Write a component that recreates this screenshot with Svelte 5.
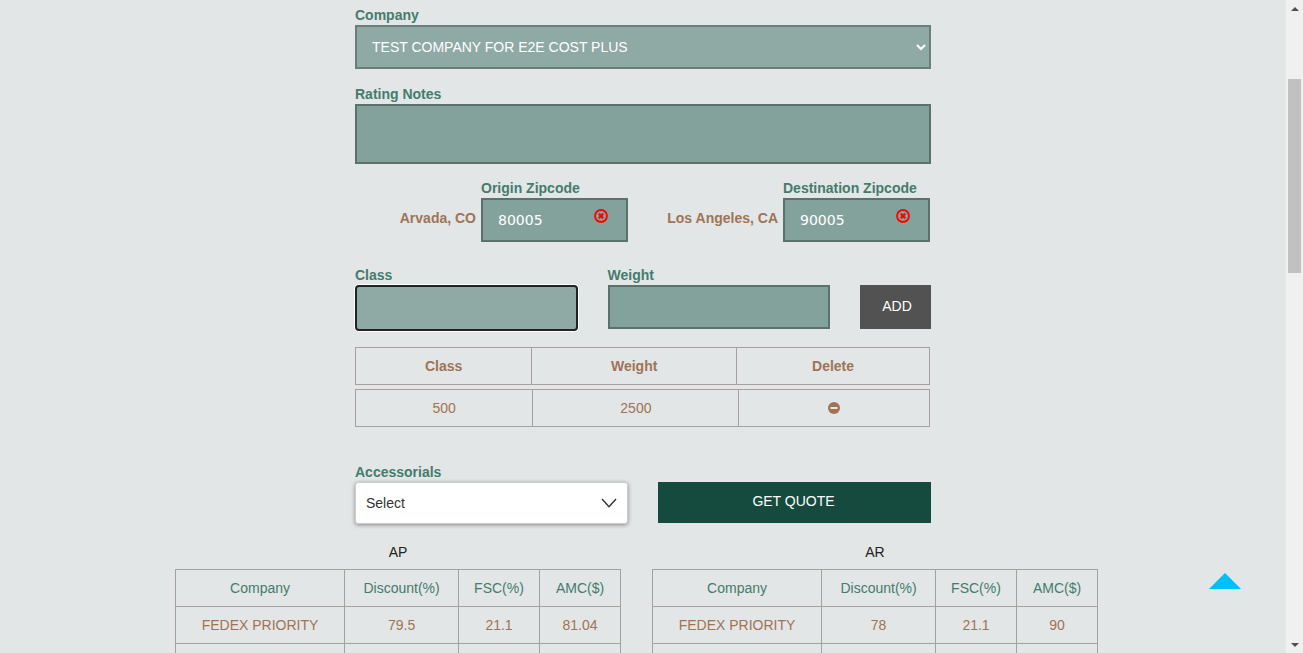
<script>
  let company = $state('TEST COMPANY FOR E2E COST PLUS');
  let notes = $state('');
  let freightClass = $state('');
  let weight = $state('');
  const zips = $state([
    { id: 'origin', label: 'Origin Zipcode', city: 'Arvada, CO', value: '80005' },
    { id: 'destination', label: 'Destination Zipcode', city: 'Los Angeles, CA', value: '90005' }
  ]);
  let items = $state([{ class: '500', weight: '2500' }]);
  const rates = [
    { name: 'AP', rows: [['FEDEX PRIORITY', '79.5', '21.1', '81.04'], ['', '', '', '']] },
    { name: 'AR', rows: [['FEDEX PRIORITY', '78', '21.1', '90'], ['', '', '', '']] }
  ];

  function add() {
    if (freightClass && weight) items.push({ class: freightClass, weight });
  }
</script>

<div class="shell">
  <main id="top">
    <form class="form" onsubmit={(e) => e.preventDefault()}>
      <div class="field">
        <label for="company">Company</label>
        <select id="company" class="box light company" bind:value={company}>
          <option>TEST COMPANY FOR E2E COST PLUS</option>
        </select>
      </div>

      <div class="field notes">
        <label for="notes">Rating Notes</label>
        <textarea id="notes" class="box" bind:value={notes}></textarea>
      </div>

      <div class="halves zips">
        {#each zips as zip}
          <div class="zip">
            <span class="city">{zip.city}</span>
            <div class="field">
              <label for={zip.id}>{zip.label}</label>
              <div class="zipbox">
                <input id={zip.id} class="box" type="text" bind:value={zip.value} />
                <button type="button" class="clear" aria-label="Clear" onclick={() => (zip.value = '')}>
                  <svg viewBox="0 0 14 14" width="14" height="14">
                    <circle cx="7" cy="7" r="6" fill="none" stroke="#f00" stroke-width="1.8" />
                    <path d="M4.8 4.8l4.4 4.4M9.2 4.8l-4.4 4.4" stroke="#f00" stroke-width="2.3" />
                  </svg>
                </button>
              </div>
            </div>
          </div>
        {/each}
      </div>

      <div class="item">
        <div class="field">
          <label for="class">Class</label>
          <input id="class" class="box light active" type="text" bind:value={freightClass} />
        </div>
        <div class="field">
          <label for="weight">Weight</label>
          <input id="weight" class="box" type="text" bind:value={weight} />
        </div>
        <button type="button" class="add" onclick={add}>ADD</button>
      </div>

      <div class="tables">
        <table class="items head">
          <thead><tr><th>Class</th><th>Weight</th><th>Delete</th></tr></thead>
        </table>
        <table class="items list">
          <tbody>
            {#each items as item, i}
              <tr>
                <td>{item.class}</td>
                <td>{item.weight}</td>
                <td>
                  <button type="button" class="remove" aria-label="Delete" onclick={() => items.splice(i, 1)}>
                    <svg viewBox="0 0 12 12" width="12" height="12">
                      <circle cx="6" cy="6" r="6" fill="#a07355" />
                      <rect x="2.5" y="5" width="7" height="2" fill="#e2e6e6" />
                    </svg>
                  </button>
                </td>
              </tr>
            {/each}
          </tbody>
        </table>
      </div>

      <div class="halves submit">
        <div class="field">
          <label for="accessorials">Accessorials</label>
          <div class="dropdown">
            <select id="accessorials"><option>Select</option></select>
            <svg viewBox="0 0 16 10" width="16" height="10">
              <path d="M1 1l7 7.6L15 1" fill="none" stroke="#333" stroke-width="1.4" />
            </svg>
          </div>
        </div>
        <button type="submit" class="quote">GET QUOTE</button>
      </div>
    </form>

    <div class="rates">
      {#each rates as rate}
        <table>
          <caption>{rate.name}</caption>
          <thead>
            <tr><th class="c1">Company</th><th class="c2">Discount(%)</th><th>FSC(%)</th><th>AMC($)</th></tr>
          </thead>
          <tbody>
            {#each rate.rows as row}
              <tr>{#each row as cell}<td>{cell}</td>{/each}</tr>
            {/each}
          </tbody>
        </table>
      {/each}
    </div>
  </main>

  <div class="scrollbar" aria-hidden="true">
    <span class="arrow up"></span>
    <span class="thumb"></span>
    <span class="arrow down"></span>
  </div>
  <a class="to-top" href="#top" aria-label="Back to top"></a>
</div>

<style>
  :global(body) {
    margin: 0;
    background: #e2e6e6;
  }
  .shell, .shell * { box-sizing: border-box; }
  .shell {
    position: relative;
    display: flex;
    height: 100vh;
    overflow: hidden;
    font: 14px/20px "Liberation Sans", Arial, sans-serif;
    color: #222;
  }
  button, input, select, textarea { font: inherit; margin: 0; }
  button { padding: 0; border: 0; cursor: pointer; }
  main { flex: 1; padding-top: 5px; overflow: hidden; }
  .form { max-width: 576px; margin: 0 auto; }
  .field { display: flex; flex-direction: column; min-width: 0; }
  label { color: #457b6d; font-weight: bold; }
  .box {
    width: 100%;
    height: 44px;
    padding: 0 15px;
    border: 2px solid #5b716c;
    border-radius: 0;
    background: #84a29c;
    color: #fff;
    outline: none;
  }
  .light { background-color: #8fa9a5; border-color: #687f7a; }
  .company { padding: 0 1px 0 11px; }
  .notes { margin-top: 15px; }
  .notes textarea { display: block; height: 60px; padding: 8px 15px; resize: none; }
  .halves { display: grid; grid-template-columns: 1fr 1fr; gap: 30px; }
  .zips { margin-top: 14px; gap: 29px; padding-right: 1px; }
  .zip { display: flex; justify-content: flex-end; gap: 5px; }
  .zip .field { width: 147px; }
  .city { padding-top: 30px; font-weight: bold; color: #a07355; white-space: nowrap; }
  .zipbox { position: relative; }
  .zipbox input { display: block; font-family: "DejaVu Sans", Verdana, sans-serif; }
  .clear {
    position: absolute;
    top: 11px;
    right: 20px;
    width: 14px;
    height: 14px;
    background: none;
  }
  svg { display: block; }
  .item {
    display: grid;
    grid-template-columns: 1fr 1fr 71px;
    gap: 30px;
    margin-top: 23px;
  }
  .active {
    height: 46px;
    border-color: #222;
    border-radius: 4px;
    box-shadow: 0 0 0 1px #fff;
  }
  .add {
    height: 44px;
    margin-top: 20px;
    padding: 0 0 2px 3px;
    background: #525252;
    color: #fff;
  }
  table { border-collapse: collapse; table-layout: fixed; }
  th, td {
    height: 37px;
    padding: 0;
    border: 1px solid #a89f9e;
    text-align: center;
    color: #a07355;
  }
  .tables {
    display: grid;
    gap: 4px;
    margin-top: 16px;
    padding-right: 1px;
  }
  .items { width: 100%; }
  .head th:first-child { width: 30.7%; }
  .head th:last-child { width: 33.6%; }
  .list td:first-child { width: 30.9%; }
  .list td:last-child { width: 33.2%; }
  .remove { display: block; margin: 0 auto; background: none; }
  .submit { margin-top: 35px; }
  .dropdown { position: relative; }
  .dropdown select {
    display: block;
    width: 100%;
    height: 42px;
    padding: 0 10px;
    border: 1px solid #ccc;
    border-radius: 3px;
    background: #fff;
    color: #333;
    appearance: none;
    box-shadow: 0 1px 4px #0006;
  }
  .dropdown svg { position: absolute; right: 11px; top: 16px; pointer-events: none; }
  .quote { height: 41px; margin-top: 20px; padding: 0 2px 3px 0; background: #144b3e; color: #fff; }
  .rates {
    display: grid;
    grid-template-columns: 1fr 1fr;
    gap: 31px;
    max-width: 936px;
    margin: 18px auto 0;
    padding-right: 13px;
  }
  .rates table { width: 100%; }
  caption { padding-bottom: 7px; }
  .rates th { color: #457b6d; font-weight: normal; }
  .c1 { width: 38%; }
  .c2 { width: 25.6%; }
  .scrollbar {
    display: grid;
    grid-template-rows: 17px 62fr 194fr 363fr 17px;
    width: 17px;
    background: #f0f0f0;
  }
  .thumb { grid-row: 3; margin: 0 2px; background: #c1c1c1; }
  .arrow { place-self: center; border: 4px solid transparent; }
  .up { border-top: 0; border-bottom-color: #505050; }
  .down { grid-row: 5; border-bottom: 0; border-top-color: #505050; }
  .to-top {
    position: absolute;
    right: 62px;
    bottom: 64px;
    border: 16px solid transparent;
    border-top: 0;
    border-bottom-color: #00bfff;
  }
</style>
